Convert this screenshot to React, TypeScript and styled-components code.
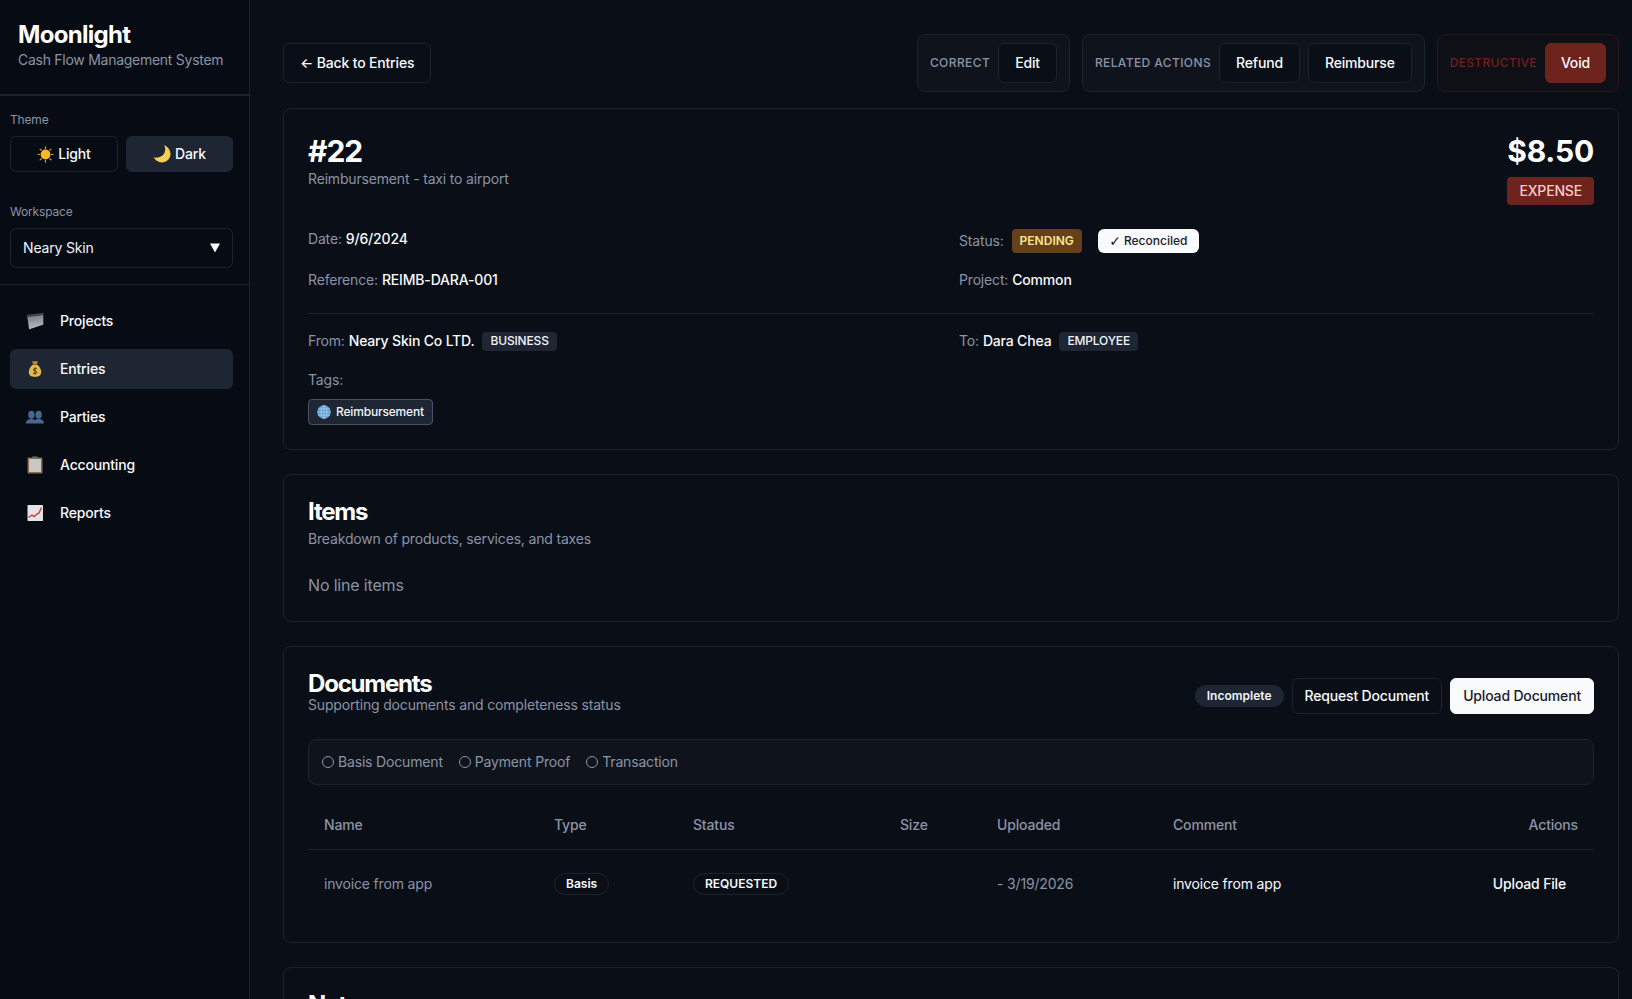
import styled, { createGlobalStyle } from "styled-components";

const GlobalStyle = createGlobalStyle`
  html, body {
    margin: 0;
    padding: 0;
    background: #0a0e17;
    color: #f8fafc;
    font-family: Inter, "Liberation Sans", sans-serif;
    font-size: 14px;
    line-height: 20px;
    letter-spacing: -0.17px;
    -webkit-font-smoothing: antialiased;
  }
  * { box-sizing: border-box; }
`;

const Sun = () => (
  <svg width="17" height="17" viewBox="0 0 16 16">
    <g stroke="#e89a1c" strokeWidth="1.1" strokeLinecap="round">
      <path d="M8 .8v1.6M8 13.6v1.6M.8 8h1.6M13.6 8h1.6M2.9 2.9l1.1 1.1M12 12l1.1 1.1M2.9 13.1 4 12M12 4l1.1-1.1" />
    </g>
    <circle cx="8" cy="8" r="4.6" fill="#fbb824" />
  </svg>
);

const Moon = () => (
  <svg width="18" height="18" viewBox="0 0 18 18">
    <path d="M11.200.3c1.600 3.200 1.300 6.500-.6 9-2 2.600-5.600 3.900-9.800 3.300 1.600 2.900 4.600 4.900 8 4.900 4.800 0 8.700-3.800 8.700-8.500 0-3.900-2.600-7.300-6.300-8.700Z" fill="#f6cf57" />
  </svg>
);

const Folder = () => (
  <svg width="18" height="18" viewBox="0 0 18 18">
    <defs>
      <linearGradient id="folderFace" x1="0" y1="0" x2="0.2" y2="1">
        <stop offset="0" stopColor="#75797f" />
        <stop offset="1" stopColor="#b8bbc0" />
      </linearGradient>
    </defs>
    <path d="M.8 2.700 17.400 .8v11.900L3 17.600Z" fill="#3f434a" />
    <path d="M1.500 5 17.200 3.200v9.300L3.200 17.200Z" fill="url(#folderFace)" />
  </svg>
);

const MoneyBag = () => (
  <svg width="18" height="18" viewBox="0 0 18 18">
    <path d="M6 1.200h6L10.800 4.500H7.200Z" fill="#b98a2e" />
    <path d="M6.800 4.800h4.400c2.700 2 4 4.700 4 7.300 0 3.300-2.400 4.900-6.200 4.900s-6.200-1.600-6.200-4.900c0-2.600 1.300-5.300 4-7.300Z" fill="#e4b94b" />
    <path d="M10.800 9c-.5-.6-3.400-.9-3.400.7s3.500 1 3.500 2.700-3.100 1.400-3.800.6M9 7.200v7.300" stroke="#4c3a12" strokeWidth="1" fill="none" />
  </svg>
);

const People = () => (
  <svg width="18" height="18" viewBox="0 0 18 18">
    <g fill="#4a6790">
      <ellipse cx="5.400" cy="6.800" rx="3.200" ry="4" />
      <ellipse cx="12.600" cy="6.800" rx="3.200" ry="4" />
      <path d="M0 15.500c0-3 2.200-4.500 5.400-4.500 1.500 0 2.700.3 3.600 1 .9-.7 2.100-1 3.600-1 3.200 0 5.400 1.500 5.400 4.500Z" />
    </g>
  </svg>
);

const Clipboard = () => (
  <svg width="18" height="18" viewBox="0 0 18 18">
    <rect x="1.500" y="1.500" width="15" height="16" rx="1" fill="#8a6d46" />
    <rect x="3" y="3" width="12" height="13" fill="#c9c7c1" />
    <rect x="6" y="0.500" width="6" height="2.500" rx="0.500" fill="#6d6a66" />
  </svg>
);

const Chart = () => (
  <svg width="18" height="18" viewBox="0 0 18 18">
    <rect x="1.500" y="1" width="15.500" height="16" rx="0.800" fill="#e2e4e8" />
    <path d="M2.500 13.500 6 11l2 1.500L11 10l2-1 2.500-5.500" stroke="#d2362f" strokeWidth="1.400" fill="none" />
  </svg>
);

const Globe = () => (
  <svg width="14" height="14" viewBox="0 0 14 14">
    <circle cx="7" cy="7" r="6.800" fill="#5f9fd6" />
    <g stroke="#cfe0ec" strokeWidth="0.500" fill="none">
      <ellipse cx="7" cy="7" rx="3" ry="6.800" />
      <path d="M7 .2v13.600M.9 3.800h12.200M.2 7h13.600M.9 10.200h12.200" />
    </g>
  </svg>
);

const Caret = () => (
  <svg width="10" height="10" viewBox="0 0 10 10">
    <path d="M0 .5h10L5 9.500Z" fill="#f8fafc" />
  </svg>
);

const Shell = styled.div`
  display: flex;
  height: 100vh;
  overflow: hidden;
`;

const Sidebar = styled.aside`
  width: 250px;
  flex: none;
  background: #070b14;
  border-right: 1px solid #1c222e;
`;

const Brand = styled.div`
  padding: 19px 18px 24px;
  border-bottom: 2px solid #1c222e;
`;

const BrandName = styled.div`
  font-size: 24px;
  line-height: 31px;
  font-weight: 700;
  color: #fff;
  letter-spacing: -0.7px;
`;

const BrandSub = styled.div`
  color: #8a94a6;
  line-height: 20px;
  letter-spacing: -0.27px;
`;

const Controls = styled.div`
  padding: 16px 16px 16px 10px;
  border-bottom: 1px solid #1c222e;
`;

const ControlLabel = styled.div<{ $gap: number }>`
  font-size: 12px;
  line-height: 16px;
  color: #8a94a6;
  margin-bottom: ${(p) => p.$gap}px;
`;

const ThemeRow = styled.div`
  display: flex;
  gap: 8px;
  margin-bottom: 32px;
`;

const ThemeButton = styled.div<{ $active?: boolean }>`
  flex: 1 1 auto;
  height: 36px;
  display: flex;
  align-items: center;
  justify-content: center;
  gap: 4px;
  border-radius: 6px;
  font-weight: 500;
  color: #f8fafc;
  background: ${(p) => (p.$active ? "#1f2633" : "transparent")};
  border: 1px solid ${(p) => (p.$active ? "#1f2633" : "#1c222e")};
`;

const Select = styled.div`
  height: 40px;
  display: flex;
  align-items: center;
  justify-content: space-between;
  padding: 0 12px;
  border: 1px solid #1c222e;
  border-radius: 6px;
  color: #f1f5f9;
`;

const Nav = styled.nav`
  display: flex;
  flex-direction: column;
  gap: 8px;
  padding: 16px 16px 0 10px;
`;

const NavItem = styled.div<{ $active?: boolean }>`
  height: 40px;
  display: flex;
  align-items: center;
  gap: 16px;
  padding: 0 16px;
  border-radius: 6px;
  font-weight: 500;
  color: #f8fafc;
  background: ${(p) => (p.$active ? "#1f2633" : "transparent")};
`;

const Main = styled.main`
  flex: 1;
  min-width: 0;
  padding: 34px 13px 0 33px;
  display: flex;
  flex-direction: column;
`;

const Toolbar = styled.div`
  display: flex;
  justify-content: space-between;
  align-items: center;
  margin-bottom: 16px;
`;

const ToolbarGroups = styled.div`
  display: flex;
  gap: 12px;
`;

const ActionGroup = styled.div<{ $danger?: boolean }>`
  display: flex;
  align-items: center;
  gap: 8px;
  padding: 8px 12px;
  border-radius: 8px;
  background: ${(p) => (p.$danger ? "#0f0f16" : "#0f131c")};
  border: 1px solid ${(p) => (p.$danger ? "#28161a" : "#1c222e")};
`;

const GroupLabel = styled.span<{ $danger?: boolean }>`
  font-size: 12px;
  font-weight: 500;
  letter-spacing: ${(p) => (p.$danger ? 0.3 : 0.4)}px;
  text-transform: uppercase;
  color: ${(p) => (p.$danger ? "#6e211d" : "#8a94a6")};
`;

const Button = styled.button<{ $variant?: "outline" | "danger" | "solid" | "ghost"; $h?: number; $px?: number }>`
  height: ${(p) => p.$h ?? 40}px;
  padding: 0 ${(p) => p.$px ?? 16}px;
  border-radius: 6px;
  font: 500 14px/20px Inter, "Liberation Sans", sans-serif;
  letter-spacing: -0.17px;
  white-space: nowrap;
  color: ${(p) => (p.$variant === "solid" ? "#1a202c" : "#f8fafc")};
  background: ${(p) =>
    p.$variant === "danger"
      ? "#6f231d"
      : p.$variant === "solid"
      ? "#f8fafc"
      : p.$variant === "ghost"
      ? "transparent"
      : "#0a0e17"};
  border: 1px solid
    ${(p) =>
      p.$variant === "danger"
        ? "#6f231d"
        : p.$variant === "solid"
        ? "#f8fafc"
        : p.$variant === "ghost"
        ? "transparent"
        : "#1c222e"};
`;

const Card = styled.section`
  border: 1px solid #1c222e;
  border-radius: 8px;
  padding: 24px;
  margin-bottom: 24px;
  flex: none;
`;

const HeroHeader = styled.div`
  display: flex;
  justify-content: space-between;
  margin-bottom: 24px;
`;

const HeroNumber = styled.div<{ $spacing: number }>`
  font-size: 30px;
  line-height: 36px;
  font-weight: 700;
  color: #fff;
  letter-spacing: ${(p) => p.$spacing}px;
`;

const Muted = styled.div`
  color: #8a94a6;
`;

const HeroAmount = styled.div`
  display: flex;
  flex-direction: column;
  align-items: flex-end;
  gap: 8px;
`;

const ExpenseBadge = styled.span`
  height: 28px;
  padding: 0 12px;
  display: flex;
  align-items: center;
  border-radius: 4px;
  background: #6f231d;
  color: #fecaca;
  font-weight: 500;
`;

const FieldGrid = styled.div`
  display: grid;
  grid-template-columns: 1fr 1fr;
  gap: 17px 16px;
`;

const Field = styled.div`
  display: flex;
  align-items: center;
  align-self: start;
  min-height: 20px;
  color: #8a94a6;
  gap: 4px;
`;

const Strong = styled.span`
  color: #f8fafc;
  font-weight: 500;
`;

const StatusBadge = styled.span`
  height: 24px;
  padding: 0 8px;
  margin-left: 4px;
  display: flex;
  align-items: center;
  border-radius: 4px;
  background: #65401a;
  color: #fde68a;
  font-size: 12px;
  font-weight: 600;
  letter-spacing: 0;
`;

const ReconciledBadge = styled.span`
  height: 24px;
  width: 101px;
  justify-content: center;
  margin-left: 12px;
  display: flex;
  align-items: center;
  gap: 3px;
  border-radius: 6px;
  background: #f8fafc;
  color: #1a202c;
  font-size: 12px;
  font-weight: 500;
  letter-spacing: 0;
`;

const CheckGlyph = styled.span`
  font-family: "DejaVu Sans", sans-serif;
  font-size: 14px;
  font-weight: 400;
`;

const Rule = styled.hr`
  border: 0;
  border-top: 1px solid #1c222e;
  margin: 23px 0 17px;
`;

const KindBadge = styled.span`
  height: 19px;
  padding: 0 8px;
  margin-left: 4px;
  display: flex;
  align-items: center;
  border-radius: 4px;
  background: #1f2633;
  color: #f1f5f9;
  font-size: 12px;
  font-weight: 500;
`;

const TagsLabel = styled(Muted)`
  margin: 19px 0 9px;
`;

const Tag = styled.span`
  display: inline-flex;
  align-items: center;
  gap: 5px;
  height: 26px;
  padding: 0 8px;
  border-radius: 4px;
  background: #1f2633;
  border: 1px solid #4a5261;
  color: #f1f5f9;
  font-size: 12px;
  font-weight: 500;
  vertical-align: top;
`;

const SectionTitle = styled.h2`
  margin: 0;
  font-size: 24px;
  line-height: 26px;
  font-weight: 700;
  color: #fff;
  letter-spacing: -1.2px;
`;

const SectionSub = styled(Muted)<{ $gap: number }>`
  margin-top: ${(p) => p.$gap}px;
`;

const EmptyText = styled.div`
  margin-top: 24px;
  font-size: 16px;
  line-height: 24px;
  color: #8a94a6;
`;

const DocsHeader = styled.div`
  display: flex;
  justify-content: space-between;
  min-height: 50px;
  margin-bottom: 18px;
`;

const DocsActions = styled.div`
  display: flex;
  align-items: center;
  gap: 8px;
`;

const CountPill = styled.span`
  height: 22px;
  padding: 0 12px;
  display: flex;
  align-items: center;
  border-radius: 11px;
  background: #1f2633;
  color: #f1f5f9;
  font-size: 12px;
  font-weight: 600;
  letter-spacing: 0;
`;

const Checklist = styled.div`
  display: flex;
  gap: 16px;
  height: 46px;
  align-items: center;
  padding: 0 13px;
  background: #0f131c;
  border: 1px solid #1c222e;
  border-radius: 8px;
  margin-bottom: 16px;
`;

const CheckItem = styled.span`
  display: flex;
  align-items: center;
  gap: 4px;
  color: #8a94a6;
`;

const Ring = styled.span`
  width: 12px;
  height: 12px;
  border-radius: 50%;
  border: 1.5px solid #8a94a6;
`;

const Table = styled.table`
  width: 100%;
  table-layout: fixed;
  border-collapse: collapse;
`;

const Th = styled.th<{ $w: number; $right?: boolean }>`
  width: ${(p) => p.$w}px;
  height: 48px;
  padding: 0 16px;
  text-align: ${(p) => (p.$right ? "right" : "left")};
  font-weight: 500;
  color: #8a94a6;
  border-bottom: 1px solid #1c222e;
`;

const Td = styled.td<{ $muted?: boolean; $right?: boolean }>`
  padding: 14px 16px;
  height: 68px;
  text-align: ${(p) => (p.$right ? "right" : "left")};
  color: ${(p) => (p.$muted ? "#8a94a6" : "#f8fafc")};
`;

const Pill = styled.span`
  display: inline-flex;
  align-items: center;
  height: 22px;
  padding: 0 11px;
  border-radius: 11px;
  border: 1px solid #1c222e;
  color: #f8fafc;
  font-size: 12px;
  font-weight: 600;
  letter-spacing: 0;
`;

const App = () => {
  return (
    <>
      <GlobalStyle />
      <Shell>
        <Sidebar>
          <Brand>
            <BrandName>Moonlight</BrandName>
            <BrandSub>Cash Flow Management System</BrandSub>
          </Brand>
          <Controls>
            <ControlLabel $gap={8}>Theme</ControlLabel>
            <ThemeRow>
              <ThemeButton>
                <Sun /> Light
              </ThemeButton>
              <ThemeButton $active>
                <Moon /> Dark
              </ThemeButton>
            </ThemeRow>
            <ControlLabel $gap={8}>Workspace</ControlLabel>
            <Select>
              Neary Skin
              <Caret />
            </Select>
          </Controls>
          <Nav>
            <NavItem><Folder /> Projects</NavItem>
            <NavItem $active><MoneyBag /> Entries</NavItem>
            <NavItem><People /> Parties</NavItem>
            <NavItem><Clipboard /> Accounting</NavItem>
            <NavItem><Chart /> Reports</NavItem>
          </Nav>
        </Sidebar>

        <Main>
          <Toolbar>
            <Button>← Back to Entries</Button>
            <ToolbarGroups>
              <ActionGroup>
                <GroupLabel>Correct</GroupLabel>
                <Button>Edit</Button>
              </ActionGroup>
              <ActionGroup>
                <GroupLabel>Related actions</GroupLabel>
                <Button>Refund</Button>
                <Button>Reimburse</Button>
              </ActionGroup>
              <ActionGroup $danger>
                <GroupLabel $danger>Destructive</GroupLabel>
                <Button $variant="danger" $px={15}>Void</Button>
              </ActionGroup>
            </ToolbarGroups>
          </Toolbar>

          <Card>
            <HeroHeader>
              <div>
                <HeroNumber $spacing={-1}>#22</HeroNumber>
                <Muted>Reimbursement - taxi to airport</Muted>
              </div>
              <HeroAmount>
                <HeroNumber $spacing={-0.2}>$8.50</HeroNumber>
                <ExpenseBadge>EXPENSE</ExpenseBadge>
              </HeroAmount>
            </HeroHeader>
            <FieldGrid>
              <Field>Date: <Strong>9/6/2024</Strong></Field>
              <Field>
                Status:
                <StatusBadge>PENDING</StatusBadge>
                <ReconciledBadge><CheckGlyph>✓</CheckGlyph> Reconciled</ReconciledBadge>
              </Field>
              <Field>Reference: <Strong>REIMB-DARA-001</Strong></Field>
              <Field>Project: <Strong>Common</Strong></Field>
            </FieldGrid>
            <Rule />
            <FieldGrid>
              <Field>From: <Strong>Neary Skin Co LTD.</Strong><KindBadge>BUSINESS</KindBadge></Field>
              <Field>To: <Strong>Dara Chea</Strong><KindBadge>EMPLOYEE</KindBadge></Field>
            </FieldGrid>
            <TagsLabel>Tags:</TagsLabel>
            <Tag><Globe /> Reimbursement</Tag>
          </Card>

          <Card>
            <SectionTitle>Items</SectionTitle>
            <SectionSub $gap={4}>Breakdown of products, services, and taxes</SectionSub>
            <EmptyText>No line items</EmptyText>
          </Card>

          <Card>
            <DocsHeader>
              <div>
                <SectionTitle>Documents</SectionTitle>
                <SectionSub $gap={-2}>Supporting documents and completeness status</SectionSub>
              </div>
              <DocsActions>
                <CountPill>Incomplete</CountPill>
                <Button $h={36} $px={12}>Request Document</Button>
                <Button $h={36} $px={12} $variant="solid">Upload Document</Button>
              </DocsActions>
            </DocsHeader>
            <Checklist>
              <CheckItem><Ring /> Basis Document</CheckItem>
              <CheckItem><Ring /> Payment Proof</CheckItem>
              <CheckItem><Ring /> Transaction</CheckItem>
            </Checklist>
            <Table>
              <thead>
                <tr>
                  <Th $w={230}>Name</Th>
                  <Th $w={139}>Type</Th>
                  <Th $w={207}>Status</Th>
                  <Th $w={97}>Size</Th>
                  <Th $w={176}>Uploaded</Th>
                  <Th $w={243}>Comment</Th>
                  <Th $w={194} $right>Actions</Th>
                </tr>
              </thead>
              <tbody>
                <tr>
                  <Td $muted>invoice from app</Td>
                  <Td><Pill>Basis</Pill></Td>
                  <Td><Pill>REQUESTED</Pill></Td>
                  <Td $muted />
                  <Td $muted>- 3/19/2026</Td>
                  <Td>invoice from app</Td>
                  <Td $right><Button $variant="ghost" $px={11}>Upload File</Button></Td>
                </tr>
              </tbody>
            </Table>
          </Card>

          <Card>
            <SectionTitle>Notes</SectionTitle>
          </Card>
        </Main>
      </Shell>
    </>
  );
};

export default App;
